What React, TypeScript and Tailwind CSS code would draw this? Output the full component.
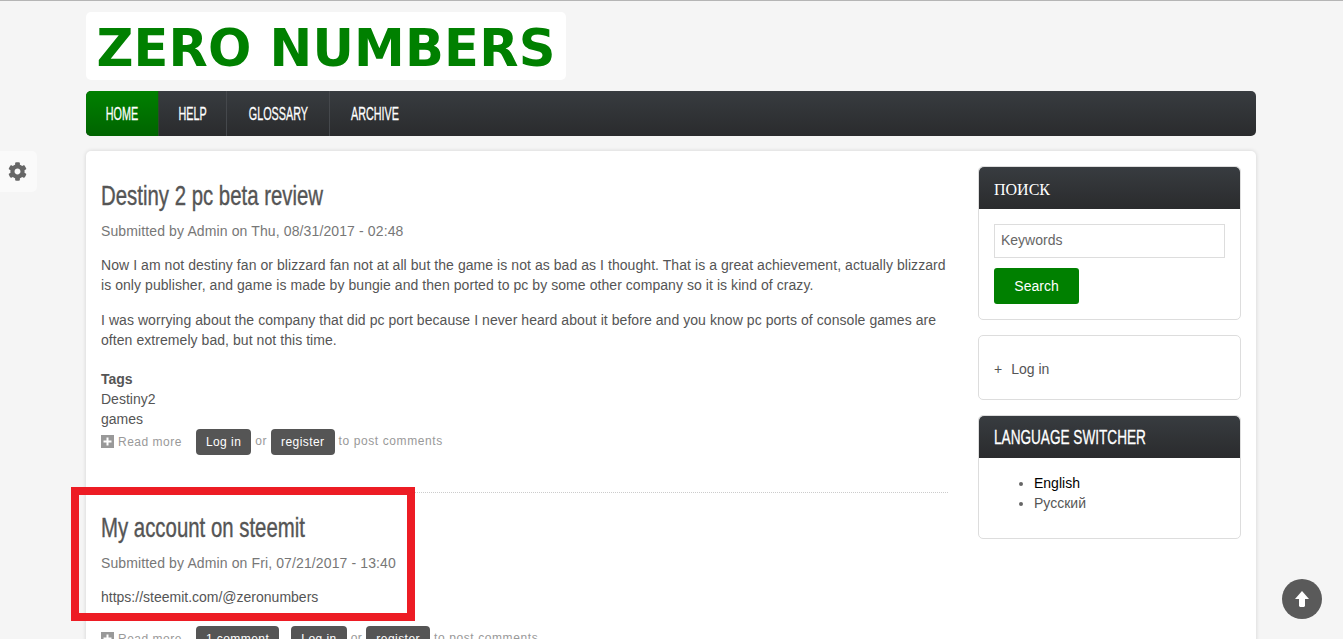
import { FaCog } from "react-icons/fa";

const sans = "font-['Liberation_Sans',Arial,sans-serif]";

const navItems = [
  { label: "HOME", cls: "w-[73px] border-r border-[#2a4a2a] bg-gradient-to-b from-[#008000] to-[#006400] rounded-l-[5px]" },
  { label: "HELP", cls: "w-[68px] border-r border-[#45484c]" },
  { label: "GLOSSARY", cls: "w-[103px] border-r border-[#45484c]" },
  { label: "ARCHIVE", cls: "w-[90px]" },
];

function Chip({ children }: { children: React.ReactNode }) {
  return (
    <span className="inline-flex h-[26px] items-center rounded-[4px] bg-[#555] px-[10px] text-[12px] tracking-[0.45px] text-white">
      {children}
    </span>
  );
}

function PostLinks({ comment }: { comment?: boolean }) {
  return (
    <div className="flex h-[26px] items-center text-[12px] tracking-[0.5px] text-[#999]">
      <svg viewBox="0 0 13 13" className="mr-[4px] -mt-[1px] h-[13px] w-[13px] shrink-0">
        <rect width="13" height="13" fill="#999" />
        <path d="M5.5 2.5h2v3h3v2h-3v3h-2v-3h-3v-2h3z" fill="#fff" />
      </svg>
      <span className="mr-[14px]">Read more</span>
      {comment && (
        <span className="mr-[12px]">
          <Chip>1 comment</Chip>
        </span>
      )}
      <Chip>Log in</Chip>
      <span className="mx-[4px] -mt-[3px]">or</span>
      <Chip>register</Chip>
      <span className="ml-[4px] -mt-[3px] tracking-[0.6px]">to post comments</span>
    </div>
  );
}

// no condensed face is installed, so narrow the regular one
function PostTitle({ children }: { children: React.ReactNode }) {
  return (
    <h2 className="h-[32px] whitespace-nowrap text-[28px] leading-[32px] text-[#555]">
      <span className="inline-block origin-left scale-x-[0.728] [-webkit-text-stroke:0.4px_#555]">{children}</span>
    </h2>
  );
}

function BlockHeader({ children, className }: { children: React.ReactNode; className: string }) {
  return (
    <div className={`flex h-[42px] items-center whitespace-nowrap rounded-t-[5px] bg-gradient-to-b from-[#383c40] to-[#2a2b2d] px-[15px] text-white ${className}`}>
      {children}
    </div>
  );
}

export default function App() {
  return (
    <div className={`${sans} relative h-[639px] w-[1343px] overflow-hidden border-t border-[#b5b5b5] bg-[#f5f5f5] text-[14px] leading-[20px] text-[#555]`}>
      <div className="ml-[86px] w-[1170px] pt-[11px]">
        <div className="flex h-[68px] w-[480px] items-center justify-center rounded-[5px] bg-white pt-[4px]">
          <span className="font-['DejaVu_Sans',sans-serif] text-[51px] font-bold leading-none tracking-[0.2px] text-[#008000]">
            ZERO NUMBERS
          </span>
        </div>

        <nav className="mt-[11px] flex h-[45px] rounded-[5px] bg-gradient-to-b from-[#383c40] to-[#2a2b2d]">
          {navItems.map((item) => (
            <a
              key={item.label}
              className={`flex items-center justify-center whitespace-nowrap text-[18px] text-white ${item.cls}`}
            >
              <span className="inline-block scale-x-[0.6] [-webkit-text-stroke:0.3px_#fff]">{item.label}</span>
            </a>
          ))}
        </nav>

        <div className="mt-[15px] flex h-[600px] rounded-[5px] bg-white pl-[15px] pr-[15px] pt-[15px] shadow-[0_0_4px_rgba(0,0,0,0.14)]">
          <main className="w-[847px]">
            <article className="h-[327px] border-b border-dotted border-[#ccc] pt-[14px]">
              <PostTitle>Destiny 2 pc beta review</PostTitle>
              <p className="mt-[9px] tracking-[0.12px] text-[#777]">
                Submitted by Admin on Thu, 08/31/2017 - 02:48
              </p>
              <p className="mt-[14px] tracking-[0.06px]">
                Now I am not destiny fan or blizzard fan not at all but the game is not as bad as I thought. That is a great achievement, actually blizzard is only publisher, and game is made by bungie and then ported to pc by some other company so it is kind of crazy.
              </p>
              <p className="mt-[15px] tracking-[0.06px]">
                I was worrying about the company that did pc port because I never heard about it before and you know pc ports of console games are often extremely bad, but not this time.
              </p>
              <div className="mt-[19px] font-bold">Tags</div>
              <div>Destiny2</div>
              <div>games</div>
              <PostLinks />
            </article>
            <article className="pt-[19px]">
              <PostTitle>My account on steemit</PostTitle>
              <p className="mt-[9px] tracking-[0.12px] text-[#777]">
                Submitted by Admin on Fri, 07/21/2017 - 13:40
              </p>
              <p className="mt-[14px]">https://steemit.com/@zeronumbers</p>
              <div className="mt-[19px]">
                <PostLinks comment />
              </div>
            </article>
          </main>

          <aside className="ml-[30px] w-[263px]">
            <section className="h-[154px] rounded-[5px] border border-[#ddd]">
              <BlockHeader className="pt-[3px] font-['Liberation_Serif',serif] text-[16px]">ПОИСК</BlockHeader>
              <div className="px-[15px] pt-[15px]">
                <div className="flex h-[34px] w-[231px] items-center border border-[#ddd] px-[6px] pb-[2px] text-[#666]">
                  Keywords
                </div>
                <button className="mt-[10px] h-[36px] w-[85px] rounded-[3px] bg-[#008000] text-white">
                  Search
                </button>
              </div>
            </section>
            <section className="mt-[15px] flex h-[65px] items-center rounded-[5px] border border-[#ddd] px-[15px] pt-[2px]">
              <span className="mr-[9px]">+</span>Log in
            </section>
            <section className="mt-[15px] h-[124px] rounded-[5px] border border-[#ddd]">
              <BlockHeader className="text-[20px]">
                <span className="inline-block origin-left scale-x-[0.68] [-webkit-text-stroke:0.3px_#fff]">LANGUAGE SWITCHER</span>
              </BlockHeader>
              <ul className="list-disc pl-[55px] pt-[15px] marker:text-[#666]">
                <li className="text-black">English</li>
                <li>Русский</li>
              </ul>
            </section>
          </aside>
        </div>
      </div>

      <div className="absolute left-0 top-[150px] flex h-[41px] w-[37px] items-center justify-center rounded-r-[5px] bg-white/50 pr-[3px]">
        <FaCog className="h-[19px] w-[19px] text-[#666]" />
      </div>

      <div className="absolute left-[71px] top-[486px] h-[134px] w-[344px] border-[8px] border-[#ed1c24]" />

      <div className="absolute left-[1282px] top-[578px] flex h-[40px] w-[40px] items-center justify-center rounded-full bg-[#5a5a5a]">
        <svg viewBox="0 0 14 16" className="h-[16px] w-[14px] fill-white">
          <path d="M7 0 L14 8 H10 V15 L9 16 H5 L4 15 V8 H0 Z" />
        </svg>
      </div>
    </div>
  );
}
